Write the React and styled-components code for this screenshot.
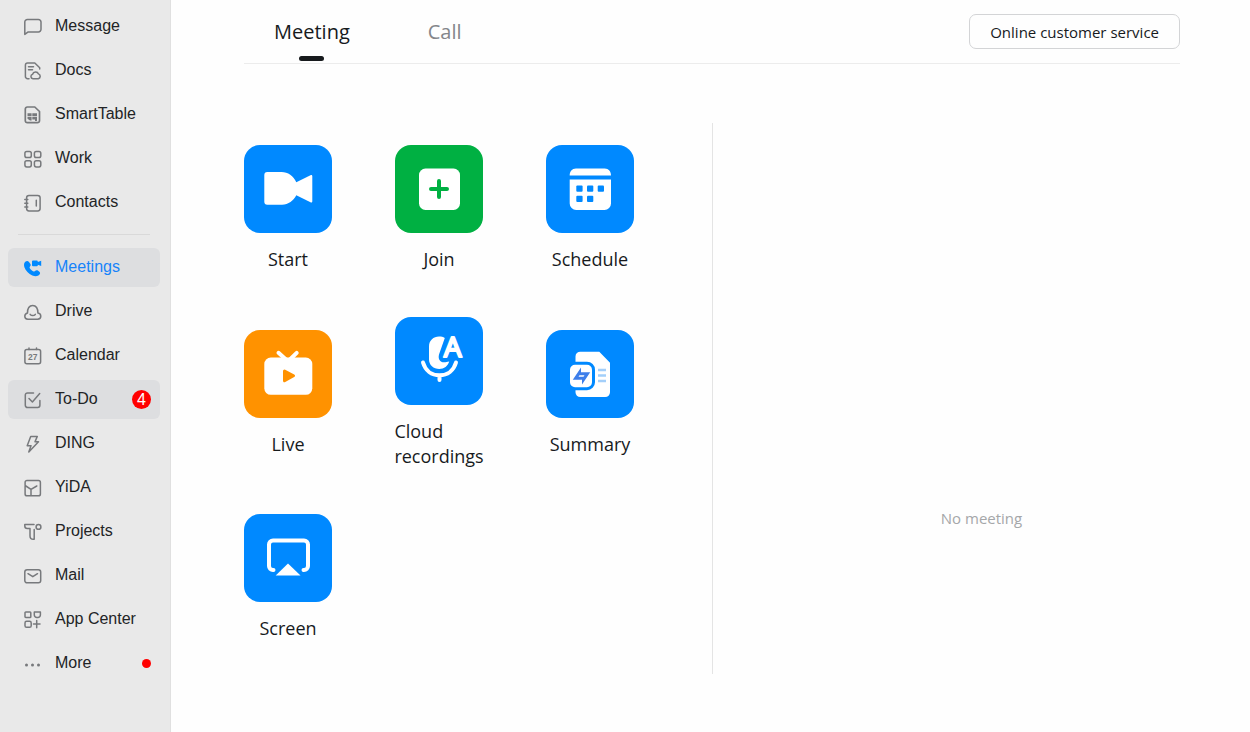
import React, { useState } from "react";
import styled, { createGlobalStyle } from "styled-components";

const GlobalStyle = createGlobalStyle`
  * {
    box-sizing: border-box;
  }

  body {
    margin: 0;
    background-color: #fefefe;
    font-family: "Open Sans", "Noto Sans", sans-serif;
    color: #171a1d;
  }

  button {
    font-family: inherit;
    color: inherit;
    background: none;
    border: none;
    padding: 0;
    cursor: pointer;
  }
`;

const Layout = styled.div`
  display: flex;
  min-height: 100vh;
`;

const SidebarWrapper = styled.nav`
  flex: 0 0 171px;
  padding: 7px 10px 0 8px;
  background-color: #e9e9e9;
  border-right: 1px solid #e0e0e0;
  font-family: "Liberation Sans", Arial, sans-serif;
`;

const NavList = styled.ul`
  display: flex;
  flex-direction: column;
  gap: 5px;
  margin: 0;
  padding: 0;
  list-style: none;
`;

const NavDivider = styled.hr`
  margin: 12px 10px 13px;
  border: none;
  border-top: 1px solid #d9d9d9;
`;

const NavItem = styled.a`
  display: flex;
  align-items: center;
  gap: 13px;
  height: 39px;
  padding: 0 9px 0 16px;
  border-radius: 6px;
  background-color: ${(props) => (props.$filled ? "#dddee0" : "transparent")};
  color: ${(props) => (props.$active ? "#1683fa" : "#222426")};
  font-size: 16px;
  line-height: 20px;
  text-decoration: none;

  svg {
    flex: none;
    color: ${(props) => (props.$active ? "#0089ff" : "#77797c")};
  }
`;

const NavLabel = styled.span`
  flex: 1;
  padding-bottom: 1px;
  white-space: nowrap;
`;

const Badge = styled.span`
  width: 19px;
  height: 19px;
  border-radius: 50%;
  background-color: #ff0000;
  color: white;
  font-size: 16px;
  line-height: 20px;
  text-align: center;
`;

const Dot = styled.span`
  width: 9px;
  height: 9px;
  border-radius: 50%;
  background-color: #ff0000;
`;

const Main = styled.main`
  flex: 1;
  min-width: 0;
  padding-left: 73px;
`;

const Header = styled.header`
  display: flex;
  justify-content: space-between;
  height: 64px;
  margin-right: 70px;
  border-bottom: 1px solid #ececec;
`;

const Tabs = styled.div`
  display: flex;
  gap: 78px;
  padding-left: 30px;
`;

const Tab = styled.button`
  display: flex;
  flex-direction: column;
  align-items: center;
  gap: 10px;
  padding-top: 18px;
  font-size: 20px;
  line-height: 28px;
  color: ${(props) => (props.$active ? "#171a1d" : "#84868a")};

  &::after {
    content: "";
    width: 25px;
    height: 5px;
    border-radius: 3px;
    background-color: ${(props) => (props.$active ? "#171a1d" : "transparent")};
  }
`;

const ServiceButton = styled.button`
  height: 35px;
  margin-top: 14px;
  padding: 0 20px;
  border: 1px solid #d3d4d6;
  border-radius: 7px;
  font-size: 15px;
`;

const Content = styled.div`
  display: flex;
  margin-top: 59px;
`;

const ActionGrid = styled.div`
  flex: 0 0 468px;
  display: grid;
  grid-template-columns: repeat(3, 88px);
  gap: 45px 63px;
  align-items: center;
  padding: 22px 0 33px;
`;

const Action = styled.button`
  display: flex;
  flex-direction: column;
  align-items: center;
  gap: 14px;
  font-size: 18px;
  line-height: 25px;
  text-align: left;
`;

const Tile = styled.span`
  width: 88px;
  height: 88px;
  border-radius: 16px;
  background-color: ${(props) => props.$color};
  color: ${(props) => props.$color};

  svg {
    display: block;
  }
`;

const MeetingList = styled.section`
  flex: 1;
  padding-top: 383px;
  border-left: 1px solid #e4e4e4;
  font-size: 15px;
  line-height: 24px;
  text-align: center;
  color: #a5a7a9;
`;

const NavIcon = ({ children }) => (
  <svg width="18" height="18" viewBox="0 0 18 18" fill="none" stroke="currentColor" strokeWidth="1.5" strokeLinecap="round" strokeLinejoin="round" aria-hidden="true">
    {children}
  </svg>
);

const TileIcon = ({ children }) => (
  <svg width="88" height="88" viewBox="0 0 88 88" fill="#fff" aria-hidden="true">
    {children}
  </svg>
);

const topItems = [
  {
    label: "Message",
    icon: <path d="M.8 16.400V4a2.600 2.600 0 0 1 2.600-2.600h11a2.600 2.600 0 0 1 2.600 2.600v7.300a2.600 2.600 0 0 1-2.600 2.600H4.200z" />,
  },
  {
    label: "Docs",
    icon: (
      <>
        <path d="M5 16.700H3.600A2.200 2.200 0 0 1 1.400 14.500V3.200A2.200 2.200 0 0 1 3.600 1H10.800L15.700 5.800V7" />
        <path d="M4.500 4.800H9.500M4.500 7.800H8.500" />
        <path d="M9 16.700a2.300 2.300 0 0 1-.4-4.500 3.100 3.100 0 0 1 5.900-.3 2.500 2.500 0 0 1-.2 4.800z" />
      </>
    ),
  },
  {
    label: "SmartTable",
    icon: (
      <>
        <path strokeWidth="1.700" d="M3.300 1H10.800L15.500 5.500V14.700A2 2 0 0 1 13.500 16.700H3.300A2 2 0 0 1 1.300 14.700V3A2 2 0 0 1 3.300 1z" />
        <path fill="currentColor" stroke="none" d="M3.500 7.200H7.600V10H3.500zM8.300 7.200H13V10H8.300zM3.500 10.700H7.600V14.500H6L3.500 12.800zM8.300 10.700H13V15H11V13.500H8.300z" />
      </>
    ),
  },
  {
    label: "Work",
    icon: (
      <>
        <rect x=".9" y="1.400" width="6.400" height="6.200" rx="1.800" />
        <rect x="10.400" y="1.400" width="6.400" height="6.200" rx="1.800" />
        <rect x=".9" y="10.700" width="6.400" height="6.200" rx="1.800" />
        <rect x="10.400" y="10.700" width="6.400" height="6.200" rx="1.800" />
      </>
    ),
  },
  {
    label: "Contacts",
    icon: (
      <>
        <rect x="2.600" y="1.400" width="13.500" height="15.600" rx="2.400" />
        <path d="M.8 5.500H3.800M.8 9.200H3.800M.8 13H3.800M12.300 6.300V12" />
      </>
    ),
  },
];

const bottomItems = [
  {
    label: "Meetings",
    active: true,
    filled: true,
    icon: (
      <path
        fill="currentColor"
        stroke="none"
        d="M1.600 2.600C2.500 1.800 4.200 1.900 5 3L6.400 5.100C7 6 6.700 6.900 6 7.600 5.400 8.200 5.500 8.700 6 9.400 7 10.800 8.200 11.700 9.600 12.400 10.300 12.700 10.800 12.400 11.300 11.800 12 11 13 11 13.800 11.500L15.400 12.700C16.300 13.400 16.300 14.600 15.500 15.600 13.900 17.800 10.800 17.600 8.300 16.500 4.700 14.900 1.600 11.700.4 8.300-.3 6-.1 4 1.600 2.600zM9 1.500H12.800A1 1 0 0 1 13.800 2.500V3L17.200 1.700V7.100L13.800 5.800V6.200A1 1 0 0 1 12.800 7.200H9A1 1 0 0 1 8 6.200V2.500A1 1 0 0 1 9 1.500z"
      />
    ),
  },
  {
    label: "Drive",
    icon: (
      <>
        <path d="M3.900 16.200C2 16.200.8 14.900.8 13.300.8 11.700 1.900 10.500 3.500 10.100 3.300 5.500 5.300 2.400 8.700 2.400 12.100 2.400 14 5.500 13.900 10.100 15.500 10.400 16.800 11.600 16.800 13.300 16.800 15 15.500 16.200 13.600 16.200z" />
        <path d="M6.200 11.400C7.600 12.900 9.900 12.900 11.300 11.400" />
      </>
    ),
  },
  {
    label: "Calendar",
    icon: (
      <>
        <rect x=".9" y="2.600" width="15.700" height="14.200" rx="2" />
        <path d="M5 .9V2.600M12.500.9V2.600" />
        <text x="8.800" y="12.900" fill="currentColor" stroke="none" fontFamily="Liberation Sans, sans-serif" fontSize="8.500" fontWeight="700" textAnchor="middle">27</text>
      </>
    ),
  },
  {
    label: "To-Do",
    filled: true,
    count: 4,
    icon: <path d="M9.500 1.900H3.500A2.200 2.200 0 0 0 1.300 4.100V14.300A2.200 2.200 0 0 0 3.500 16.500H13.700A2.200 2.200 0 0 0 15.900 14.300V9.500M5 7.500L8.400 11 15.700 2.600" />,
  },
  {
    label: "DING",
    icon: <path d="M6.700 1.400H13.300L11 6.700H14.500L4.800 17 7 10.700H3.200z" />,
  },
  {
    label: "YiDA",
    icon: <path d="M3 1.500H14.500A1.900 1.900 0 0 1 16.400 3.400V14.900A1.900 1.900 0 0 1 14.500 16.800H3A1.900 1.900 0 0 1 1.100 14.900V3.400A1.900 1.900 0 0 1 3 1.500zM1.100 6.500L7 10.400 12.800 7M7 10.400V16.800" />,
  },
  {
    label: "Projects",
    icon: (
      <>
        <path d="M10 1.600H.8V3.100A2.500 2.500 0 0 0 3.300 5.600H6V13A3.300 3.300 0 0 0 9.300 16.300H10.200V6.500" />
        <circle cx="14.500" cy="3.900" r="2.400" />
      </>
    ),
  },
  {
    label: "Mail",
    icon: (
      <>
        <rect x=".8" y="2.800" width="15.900" height="13" rx="2.300" />
        <path d="M4 6.700L8.800 9.700 13.500 6.700" />
      </>
    ),
  },
  {
    label: "App Center",
    icon: (
      <>
        <rect x="1" y="1" width="5.800" height="5.500" rx=".8" />
        <path d="M10.300 1H16.400V4A2.500 2.500 0 0 1 13.900 6.500H12.800A2.500 2.500 0 0 1 10.300 4z" />
        <rect x="1" y="10.300" width="6.200" height="6" rx="1.600" />
        <path d="M12.700 9.500V16.700M9.500 13H16" />
      </>
    ),
  },
  {
    label: "More",
    dot: true,
    icon: (
      <g fill="currentColor" stroke="none">
        <circle cx="2.500" cy="10" r="1.500" />
        <circle cx="8.500" cy="10" r="1.500" />
        <circle cx="14.500" cy="10" r="1.500" />
      </g>
    ),
  },
];

const actions = [
  {
    label: "Start",
    color: "#0089ff",
    icon: (
      <path d="M23.300 27H37.500C44 27 49.500 31 52.300 37.300L66.500 30.200C67.500 29.700 68.300 30.200 68.300 31.300V56.200C68.300 57.300 67.500 57.800 66.500 57.300L52.300 50.300C49.500 55.700 44.500 59.700 38 59.700H23.300A3 3 0 0 1 20.300 56.700V30A3 3 0 0 1 23.300 27z" />
    ),
  },
  {
    label: "Join",
    color: "#00b042",
    icon: (
      <>
        <rect x="24" y="23.500" width="41" height="41.500" rx="6.500" />
        <path d="M44 36V52M36 44H52" stroke="currentColor" strokeWidth="4" strokeLinecap="round" />
      </>
    ),
  },
  {
    label: "Schedule",
    color: "#0089ff",
    icon: (
      <>
        <path d="M23.700 30.400C23.700 26.500 26 23.500 30 23.500H58.700C62.700 23.500 65 26.500 65 30.400zM23.700 34.400H65V58.500A6.500 6.500 0 0 1 58.500 65H30.200A6.500 6.500 0 0 1 23.700 58.500z" />
        <g fill="currentColor">
          <rect x="30.300" y="40.400" width="6.300" height="6.300" rx="1" />
          <rect x="41" y="40.400" width="6.300" height="6.300" rx="1" />
          <rect x="51.700" y="40.400" width="6.300" height="6.300" rx="1" />
          <rect x="30.300" y="50.700" width="6.300" height="6.300" rx="1" />
          <rect x="41" y="50.700" width="6.300" height="6.300" rx="1" />
        </g>
      </>
    ),
  },
  {
    label: "Live",
    color: "#ff9200",
    icon: (
      <>
        <rect x="20.300" y="27.500" width="48" height="37.300" rx="6.500" />
        <path d="M34.500 22.800L42.500 30M52.700 22.800L45.500 30" stroke="#fff" strokeWidth="4" strokeLinecap="round" />
        <path d="M40.500 41L49.500 45.800 40.500 50.700z" fill="currentColor" stroke="currentColor" strokeWidth="3" strokeLinejoin="round" />
      </>
    ),
  },
  {
    label: "Cloud recordings",
    color: "#0089ff",
    icon: (
      <>
        <path d="M34 29.500C34 23.500 38.500 19.600 44 19.600 46.300 19.600 48.200 20 49.800 20.900L44 37.500C42.800 42 45 45.300 49 45.300 51 45.300 52 44.700 54.200 44.500 53 49 49 52 44.300 52 38.500 52 34 48 34 42.500z" />
        <path d="M28 45.500C30.300 53.500 36.500 58.300 44.500 58.300 52.500 58.300 58.700 53.500 61 45.500M44.500 58.300V63" fill="none" stroke="#fff" strokeWidth="4" strokeLinecap="round" />
        <text x="57.600" y="39.800" fontFamily="Noto Sans, sans-serif" fontSize="28" fontWeight="400" stroke="#fff" strokeWidth="2" strokeLinejoin="round" textAnchor="middle">A</text>
      </>
    ),
  },
  {
    label: "Summary",
    color: "#0089ff",
    icon: (
      <>
        <path d="M34.300 21.700H53.300L64 32.700V62.300A4.800 4.800 0 0 1 59.200 67.100H34.300A4.800 4.800 0 0 1 29.500 62.300V26.500A4.800 4.800 0 0 1 34.300 21.700z" />
        <rect x="22.500" y="33.200" width="25" height="25.500" rx="6.500" stroke="currentColor" strokeWidth="3" />
        <path d="M35 37.500V43L32.500 46.700H38L35.800 49.800H26.800zM36 54.500V49L38.500 45.300H33L35.200 42.200H44.200z" fill="#3d7eea" />
        <path d="M52 40H60M52 45.500H60M52 51H60" stroke="#a3cffa" strokeWidth="2.400" />
      </>
    ),
  },
  {
    label: "Screen",
    color: "#0089ff",
    icon: (
      <>
        <path d="M29.500 56H29A4 4 0 0 1 25 52V30.500A4 4 0 0 1 29 26.500H60A4 4 0 0 1 64 30.500V52A4 4 0 0 1 60 56H59.500" fill="none" stroke="#fff" strokeWidth="4" strokeLinecap="round" />
        <path d="M44 49.500L56.500 61.500H31.700z" />
      </>
    ),
  },
];

const NavEntry = ({ item }) => (
  <li>
    <NavItem href="#" $active={item.active} $filled={item.filled}>
      <NavIcon>{item.icon}</NavIcon>
      <NavLabel>{item.label}</NavLabel>
      {item.count && <Badge>{item.count}</Badge>}
      {item.dot && <Dot />}
    </NavItem>
  </li>
);

const Sidebar = () => (
  <SidebarWrapper>
    <NavList>
      {topItems.map((item) => (
        <NavEntry key={item.label} item={item} />
      ))}
    </NavList>
    <NavDivider />
    <NavList>
      {bottomItems.map((item) => (
        <NavEntry key={item.label} item={item} />
      ))}
    </NavList>
  </SidebarWrapper>
);

const App = () => {
  const [tab, setTab] = useState("Meeting");

  return (
    <>
      <GlobalStyle />
      <Layout>
        <Sidebar />

        <Main>
          {/* Tabs and support button */}
          <Header>
            <Tabs>
              {["Meeting", "Call"].map((name) => (
                <Tab key={name} $active={tab === name} onClick={() => setTab(name)}>
                  {name}
                </Tab>
              ))}
            </Tabs>
            <ServiceButton>Online customer service</ServiceButton>
          </Header>

          <Content>
            <ActionGrid>
              {actions.map((action) => (
                <Action key={action.label}>
                  <Tile $color={action.color}>
                    <TileIcon>{action.icon}</TileIcon>
                  </Tile>
                  <span>{action.label}</span>
                </Action>
              ))}
            </ActionGrid>
            <MeetingList>No meeting</MeetingList>
          </Content>
        </Main>
      </Layout>
    </>
  );
};

export default App;
